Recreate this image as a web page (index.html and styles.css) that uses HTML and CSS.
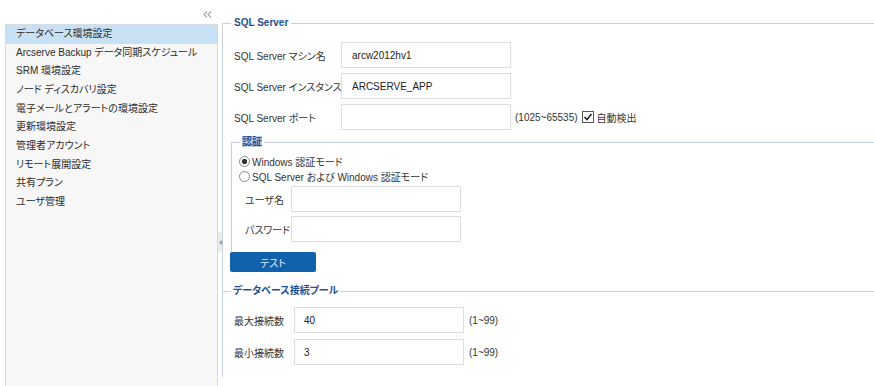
FILE: index.html
```html
<!DOCTYPE html>
<html lang="ja">
<head>
  <meta charset="UTF-8">
  <title>データベース環境設定</title>
  <link rel="stylesheet" href="styles.css">
</head>
<body>
  <div class="page">
    <aside class="sidebar">
      <div class="sidebar-top">
        <svg class="collapse" width="9" height="7" viewBox="0 0 9 7">
          <path d="M4 0.5 L1 3.5 L4 6.5 M8 0.5 L5 3.5 L8 6.5" fill="none" stroke="#a9a9a9" stroke-width="1.2"/>
        </svg>
      </div>
      <ul class="menu">
        <li class="active">データベース環境設定</li>
        <li>Arcserve Backup データ同期スケジュール</li>
        <li>SRM 環境設定</li>
        <li>ノード ディスカバリ設定</li>
        <li>電子メールとアラートの環境設定</li>
        <li>更新環境設定</li>
        <li>管理者アカウント</li>
        <li>リモート展開設定</li>
        <li>共有プラン</li>
        <li>ユーザ管理</li>
      </ul>
    </aside>

    <div class="splitter">
      <span class="handle">
        <svg width="3" height="5" viewBox="0 0 3 5"><path d="M3 0 L0 2.5 L3 5 Z" fill="#9a9a9a"/></svg>
      </span>
    </div>

    <main class="content">
      <section class="group group-sql">
        <div class="group-title">SQL Server</div>
        <div class="row">
          <label class="lbl">SQL Server マシン名</label>
          <input class="field" type="text" value="arcw2012hv1">
        </div>
        <div class="row">
          <label class="lbl">SQL Server インスタンス</label>
          <input class="field" type="text" value="ARCSERVE_APP">
        </div>
        <div class="row">
          <label class="lbl">SQL Server ポート</label>
          <input class="field" type="text" value="">
          <span class="hint">(1025~65535)</span>
          <span class="check">
            <svg width="12" height="12" viewBox="0 0 12 12">
              <rect x="0.5" y="0.5" width="11" height="11" fill="#fff" stroke="#555"/>
              <path d="M2.5 6 L5 8.5 L9.5 3" fill="none" stroke="#222" stroke-width="1.6"/>
            </svg>
            自動検出
          </span>
        </div>

        <section class="group group-auth">
          <div class="group-title"><span class="mark">認証</span></div>
          <label class="radio-row"><input type="radio" name="auth" checked>Windows 認証モード</label>
          <label class="radio-row"><input type="radio" name="auth">SQL Server および Windows 認証モード</label>
          <div class="row auth-row">
            <label class="lbl-auth">ユーザ名</label>
            <input class="field" type="text" value="">
          </div>
          <div class="row auth-row">
            <label class="lbl-auth">パスワード</label>
            <input class="field" type="password" value="">
          </div>
        </section>
        <button type="button" class="btn">テスト</button>
      </section>

      <section class="group group-pool">
        <div class="group-title">データベース接続プール</div>
        <div class="row">
          <label class="lbl-pool">最大接続数</label>
          <input class="field" type="text" value="40">
          <span class="hint">(1~99)</span>
        </div>
        <div class="row">
          <label class="lbl-pool">最小接続数</label>
          <input class="field" type="text" value="3">
          <span class="hint">(1~99)</span>
        </div>
      </section>
    </main>
  </div>
</body>
</html>
```

FILE: styles.css
```css
/* Base */
* {
  box-sizing: border-box;
}

body {
  margin: 0;
  font-family: "Liberation Sans", "Noto Sans CJK JP", sans-serif;
  font-size: 10px;
  font-feature-settings: "palt";
  color: #333;
  background: #fff;
}

.page {
  display: flex;
  height: 386px;
  overflow: hidden;
}

/* Sidebar */
.sidebar {
  width: 218px;
  flex: none;
  display: flex;
  flex-direction: column;
  padding-left: 5px;
}

.sidebar-top {
  height: 24px;
  display: flex;
  justify-content: flex-end;
  align-items: center;
  padding: 4px 6px 0 0;
}

.menu {
  flex: 1;
  margin: 0;
  padding: 0;
  list-style: none;
  background: #f7f7f7;
  border: 1px solid #d8dce4;
  border-bottom: none;
}

.menu li {
  height: 18.67px;
  line-height: 18.67px;
  padding-left: 10px;
  white-space: nowrap;
  color: #2b2b2b;
}

.menu li.active {
  background: #c8e0f3;
}

.splitter {
  width: 4px;
  flex: none;
  padding-top: 232px;
}

.handle {
  display: flex;
  align-items: center;
  justify-content: center;
  width: 4px;
  height: 20px;
  background: #ececec;
  border-radius: 0 3px 3px 0;
}

/* Content */
.content {
  flex: 1;
  min-width: 0;
}

.group {
  border-top: 1px solid #cbd0e0;
  border-left: 1px solid #cbd0e0;
  padding-left: 8px;
}

.group-title {
  width: fit-content;
  height: 14px;
  margin-top: -8px;
  padding: 0 3px;
  line-height: 14px;
  background: #fff;
  font-weight: bold;
  color: #1f4f94;
}

.group-sql {
  margin-top: 23px;
  padding-bottom: 19px;
}

.row {
  display: flex;
  align-items: center;
  height: 26px;
  margin-left: 3px;
  margin-top: 5px;
  white-space: nowrap;
}

.group-title + .row {
  margin-top: 12px;
}

.lbl {
  width: 107px;
  flex: none;
}

.field {
  width: 170px;
  height: 26px;
  flex: none;
  margin: 0;
  padding: 0 10px;
  border: 1px solid #dedede;
  font: inherit;
  color: #222;
  background: #fff;
}

.hint {
  margin-left: 4px;
}

.check {
  display: flex;
  align-items: center;
  gap: 3px;
  margin-left: 4px;
}

/* Auth box */
.group-auth {
  margin-top: 12px;
  padding-bottom: 10px;
}

.group-auth .group-title {
  padding: 0 2px;
}

.mark {
  background: #bfd5ef;
}

.radio-row {
  display: flex;
  align-items: center;
  gap: 2px;
  height: 15px;
  margin-left: -1px;
}

.group-title + .radio-row {
  margin-top: 5px;
}

.radio-row input {
  appearance: none;
  width: 11px;
  height: 11px;
  margin: 0;
  border: 1px solid #8a8a8a;
  border-radius: 50%;
  background: #fff;
}

.radio-row input:checked {
  background: radial-gradient(circle, #333 0 2.4px, #fff 3px);
}

.auth-row {
  margin-left: 5px;
  margin-top: 4px;
}

.radio-row + .auth-row {
  margin-top: 2px;
}

.lbl-auth {
  width: 46px;
  flex: none;
}

.btn {
  display: block;
  width: 86px;
  height: 20px;
  margin: 0 0 0 -1px;
  padding: 0;
  border: none;
  border-radius: 2px;
  background: #1062ad;
  color: #e4ecf6;
  font: inherit;
}

/* Pool */
.group-pool {
  padding-bottom: 12px;
}

.group-pool .group-title {
  padding: 0 2px;
}

.group-pool .group-title + .row {
  margin-top: 9px;
}

.group-pool .row {
  margin-top: 6px;
}

.group-pool .field {
  padding-left: 9px;
}

.lbl-pool {
  width: 60px;
  flex: none;
}

.group-pool .hint {
  margin-left: 5px;
}
```
